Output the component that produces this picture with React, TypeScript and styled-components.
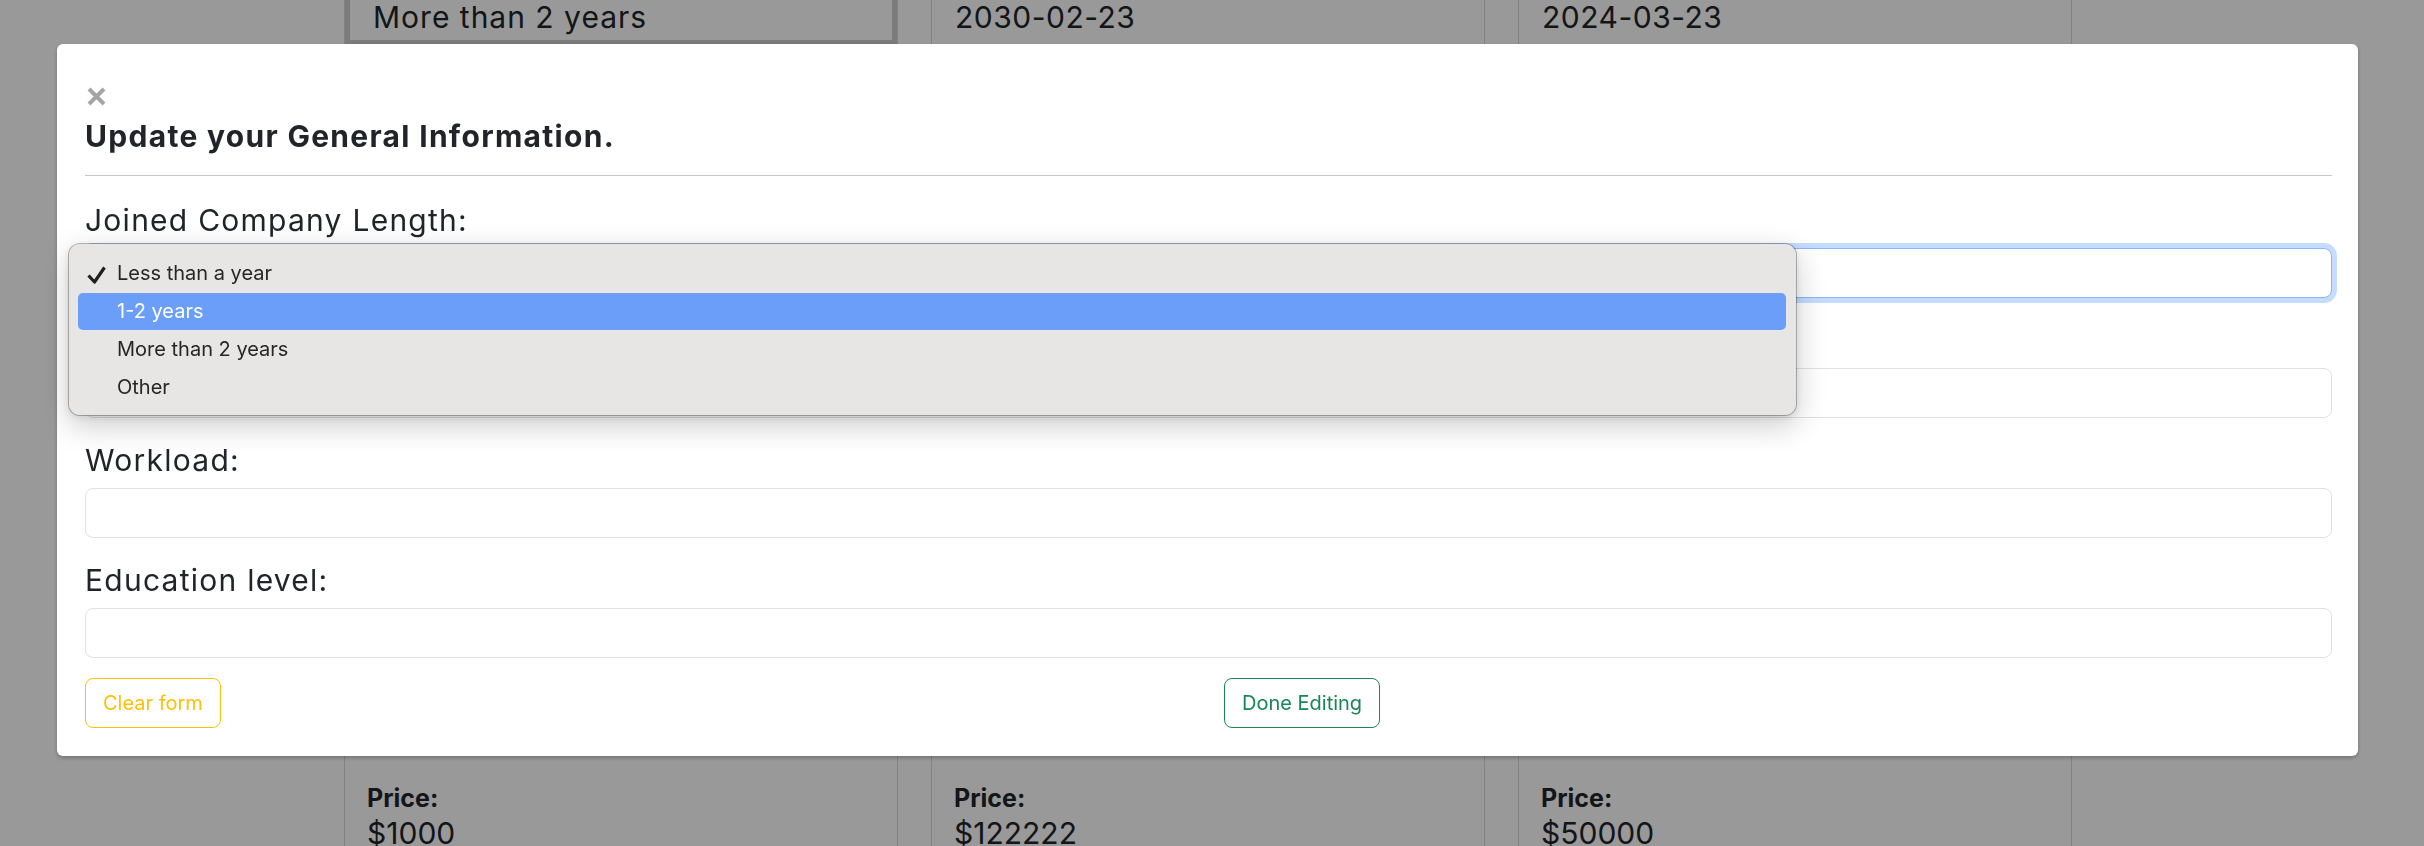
import React from 'react'
import styled, { createGlobalStyle, css } from 'styled-components'

const GlobalStyle = createGlobalStyle`
  * { box-sizing: border-box; }
  html, body {
    margin: 0;
    padding: 0;
  }
  body {
    font-family: Inter, "Liberation Sans", sans-serif;
    color: #212529;
    background: #fff;
    overflow: hidden;
  }
`

/* page underneath the modal */

const Page = styled.div`
  height: 846px;
  overflow: hidden;
`

const CardGrid = styled.div`
  display: grid;
  grid-template-columns: repeat(3, 554px);
  column-gap: 33px;
  margin: -11px 0 0 344px;
`

const Card = styled.div`
  display: flex;
  flex-direction: column;
  min-height: 863px;
  border: 1px solid #d9d9d9;
`

const TopValue = styled.div<{ $selected?: boolean }>`
  font-size: 30px;
  line-height: 45px;
  letter-spacing: 0.5px;
  padding: 0 23px;
  border: solid transparent;
  border-width: 5px 0;
  ${({ $selected }) =>
    $selected &&
    css`
      border: 5px solid #cdcdcd;
      letter-spacing: 1px;
    `}
`

const PriceBlock = styled.div`
  margin-top: auto;
  padding: 0 22px;
`

const PriceLabel = styled.div`
  font-size: 25px;
  font-weight: 700;
  line-height: 30px;
  margin-bottom: 2px;
`

const PriceValue = styled.div`
  font-size: 30px;
  line-height: 36px;
`

/* modal */

const Backdrop = styled.div`
  position: fixed;
  inset: 0;
  background: rgba(0, 0, 0, 0.4);
`

const ModalLayer = styled.div`
  position: fixed;
  inset: 0;
  padding-top: 44px;
`

const Dialog = styled.div`
  width: 2301px;
  margin-left: 57px;
  padding: 0 26px 28px 28px;
  background: #fff;
  border-radius: 6px;
  box-shadow: 0 2px 4px rgba(0, 0, 0, 0.25);
`

const Header = styled.div`
  padding: 43px 0 21px;
  border-bottom: 1px solid #c7c7c7;
`

const CloseButton = styled.button`
  display: block;
  width: 19px;
  height: 19px;
  margin: 0 0 0 2px;
  padding: 0;
  border: 0;
  background: none;
  color: #a5a5a5;
  cursor: pointer;

  svg {
    display: block;
  }
`

const Title = styled.h2`
  margin: 14px 0 0;
  font-size: 30px;
  font-weight: 700;
  line-height: 33.6px;
  letter-spacing: 1.3px;
`

const Body = styled.form`
  padding-top: 22px;
`

const Field = styled.div`
  position: relative;
  margin-bottom: 20px;
`

const Label = styled.label`
  display: block;
  margin-bottom: 5px;
  font-size: 30px;
  line-height: 45px;
  letter-spacing: 1.25px;
`

const controlStyles = css<{ $focused?: boolean }>`
  display: block;
  width: 100%;
  height: 50px;
  padding: 0 18px;
  font: 400 20px Inter, "Liberation Sans", sans-serif;
  color: #212529;
  background: #fff;
  border: 1px solid #dee2e6;
  border-radius: 8px;
  outline: none;
  appearance: none;
  ${({ $focused }) =>
    $focused &&
    css`
      border-color: #86b7fe;
      box-shadow: 0 0 0 5px rgba(13, 110, 253, 0.24);
    `}
`

const Select = styled.select<{ $focused?: boolean }>`
  ${controlStyles}
`

const TextInput = styled.input<{ $focused?: boolean }>`
  ${controlStyles}
`

const OptionMenu = styled.ul`
  position: absolute;
  top: 45px;
  left: -17px;
  z-index: 2;
  width: 1729px;
  margin: 0;
  padding: 11px 0 8px;
  list-style: none;
  background: #e8e6e4;
  background-clip: padding-box;
  border: 1px solid rgba(0, 0, 0, 0.27);
  border-radius: 12px;
  box-shadow: 0 10px 30px rgba(0, 0, 0, 0.2), 0 2px 6px rgba(0, 0, 0, 0.08);
`

const OptionItem = styled.li<{ $active?: boolean }>`
  display: flex;
  align-items: center;
  height: 37px;
  margin: 0 10px 1px 9px;
  padding-left: 9px;
  border-radius: 5px;
  font-size: 20px;
  color: ${({ $active }) => ($active ? '#fff' : '#262626')};
  background: ${({ $active }) => ($active ? '#6a9ef9' : 'transparent')};
`

const CheckSlot = styled.span`
  display: flex;
  align-items: center;
  width: 30px;
  height: 100%;
  padding-top: 3px;
`

const Footer = styled.div`
  display: grid;
  grid-template-columns: 1fr 1fr;
  column-gap: 31px;
  align-items: start;
  margin-top: 2px;
`

const tones = {
  warning: '#ffc107',
  success: '#198754',
}

const OutlineButton = styled.button<{ $tone: keyof typeof tones }>`
  justify-self: start;
  height: 50px;
  padding: 0 17px;
  font: 400 20px Inter, "Liberation Sans", sans-serif;
  color: ${({ $tone }) => tones[$tone]};
  background: transparent;
  border: 1px solid ${({ $tone }) => tones[$tone]};
  border-radius: 8px;
  cursor: pointer;
`

const lengthOptions = ['Less than a year', '1-2 years', 'More than 2 years', 'Other']

const cards = [
  { top: 'More than 2 years', price: '$1000', selected: true },
  { top: '2030-02-23', price: '$122222' },
  { top: '2024-03-23', price: '$50000' },
]

function CloseIcon() {
  return (
    <svg width="19" height="19" viewBox="0 0 19 19">
      <path d="M2 2 L17 17 M17 2 L2 17" stroke="currentColor" strokeWidth="4" />
    </svg>
  )
}

function CheckIcon() {
  return (
    <svg width="19" height="18" viewBox="0 0 19 18">
      <path d="M1.5 9.5 L7.5 16 L17.5 1.5" fill="none" stroke="#1f1f1f" strokeWidth="3.2" strokeLinejoin="round" />
    </svg>
  )
}

export default function App() {
  return (
    <>
      <GlobalStyle />
      <Page>
        <CardGrid>
          {cards.map((card) => (
            <Card key={card.price}>
              <TopValue $selected={card.selected}>{card.top}</TopValue>
              <PriceBlock>
                <PriceLabel>Price:</PriceLabel>
                <PriceValue>{card.price}</PriceValue>
              </PriceBlock>
            </Card>
          ))}
        </CardGrid>
      </Page>

      <Backdrop />
      <ModalLayer>
        <Dialog>
          <Header>
            <CloseButton type="button" aria-label="Close">
              <CloseIcon />
            </CloseButton>
            <Title>Update your General Information.</Title>
          </Header>

          <Body onSubmit={(e) => e.preventDefault()}>
            <Field>
              <Label>Joined Company Length:</Label>
              <Select $focused defaultValue={lengthOptions[0]}>
                {lengthOptions.map((o) => (
                  <option key={o}>{o}</option>
                ))}
              </Select>
              <OptionMenu>
                {lengthOptions.map((o, i) => (
                  <OptionItem key={o} $active={i === 1}>
                    <CheckSlot>{i === 0 && <CheckIcon />}</CheckSlot>
                    {o}
                  </OptionItem>
                ))}
              </OptionMenu>
            </Field>
            <Field>
              <Label>Work Location:</Label>
              <TextInput />
            </Field>
            <Field>
              <Label>Workload:</Label>
              <TextInput />
            </Field>
            <Field>
              <Label>Education level:</Label>
              <TextInput />
            </Field>

            <Footer>
              <OutlineButton type="button" $tone="warning">Clear form</OutlineButton>
              <OutlineButton type="submit" $tone="success">Done Editing</OutlineButton>
            </Footer>
          </Body>
        </Dialog>
      </ModalLayer>
    </>
  )
}
